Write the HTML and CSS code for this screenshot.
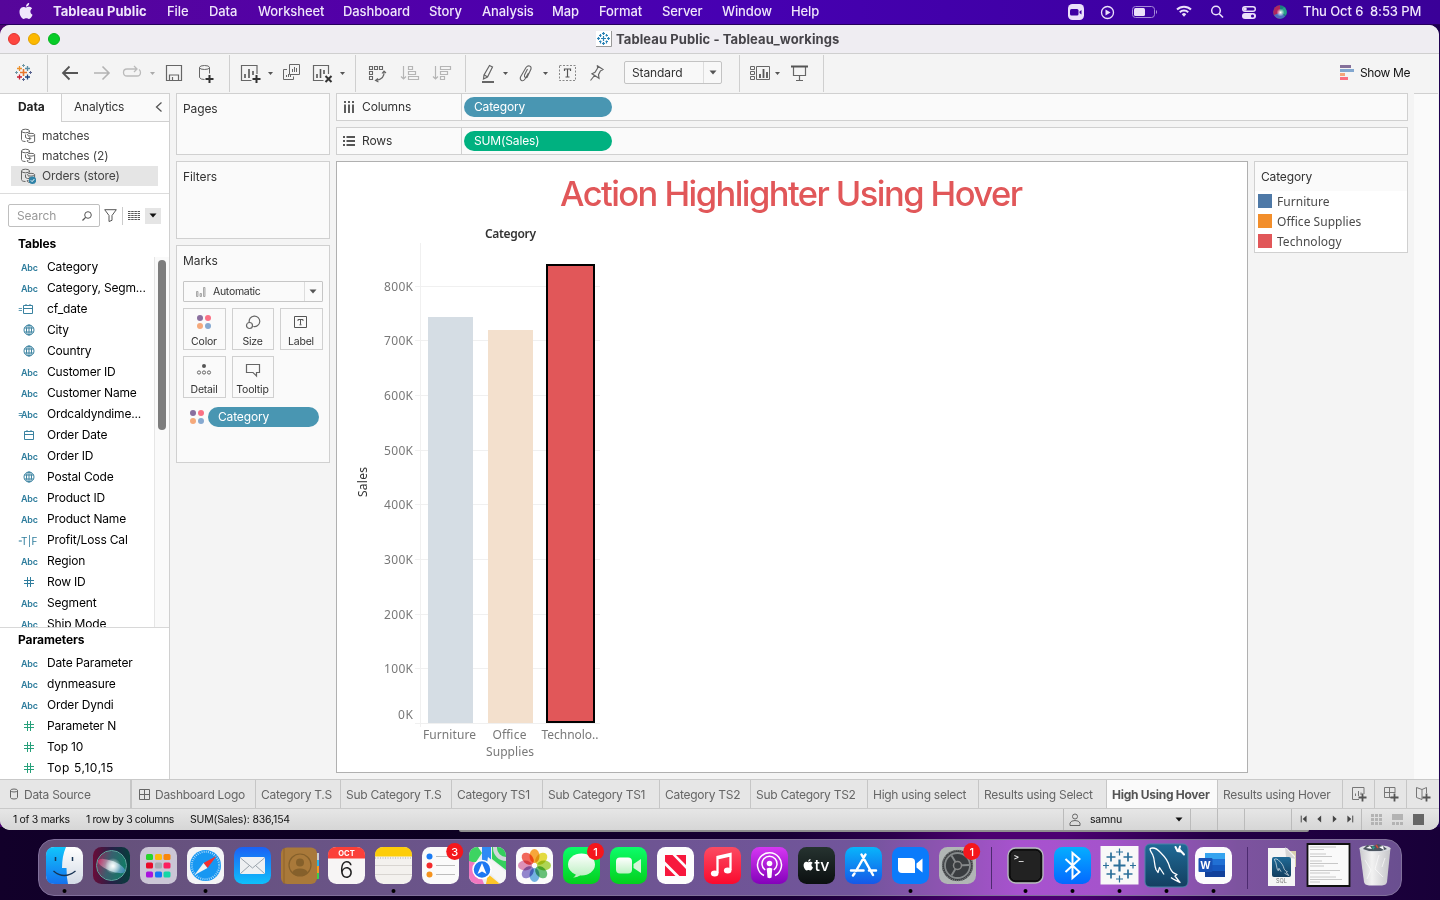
FILE: index.html
```html
<!DOCTYPE html>
<html lang="en">
<head>
<meta charset="utf-8">
<title>Tableau Public - Tableau_workings</title>
<link rel="stylesheet" href="styles.css">
</head>
<body>
<svg width="0" height="0" class="defs">
  <defs>
    <symbol id="globe" viewBox="0 0 12 12"><g fill="none" stroke="#3a82a0"><circle cx="6" cy="6" r="5"/><ellipse cx="6" cy="6" rx="2.500" ry="5"/><path d="M1.500 4h9M1.500 8h9M6 1v10"/></g></symbol>
    <symbol id="cal" viewBox="0 0 12 12"><path d="M1.500 2.500h9v8h-9zM1.500 5.500h9M4 1v2M8 1v2" fill="none" stroke="#3a82a0"/></symbol>
    <symbol id="hash" viewBox="0 0 12 12"><path d="M4.500 1v10M7.500 1v10M1 4.500h10M1 7.500h10" fill="none" stroke="currentColor" stroke-width="1"/></symbol>
    <symbol id="ds" viewBox="0 0 16 16"><g fill="none" stroke="#666" stroke-width="1"><path d="M5.500 13.500C3 13.500 1.500 12.800 1.500 11.500V3"/><ellipse cx="5.500" cy="3" rx="4" ry="1.800"/><path d="M9.500 3v1.500"/><ellipse cx="11" cy="6.700" rx="3.600" ry="1.400"/><path d="M14.600 6.700V13.500c-1 1.500-6.200 1.500-7.200 0V12M5.500 6.500q-1 4 2 4h3M8.800 8.500l2 2-2 2"/></g></symbol>
    <symbol id="dots" viewBox="0 0 16 16"><circle cx="4" cy="4" r="3" fill="#8a6f9e"/><circle cx="12" cy="4" r="3" fill="#fb7185"/><circle cx="4" cy="12" r="3" fill="#f5a97b"/><circle cx="12" cy="12" r="3" fill="#86a9d0"/></symbol>
    <symbol id="caret" viewBox="0 0 8 5"><path d="M0.500 0.500h7L4 4.500z" fill="currentColor"/></symbol>
    <linearGradient id="gFinder" x2="0" y2="1"><stop stop-color="#11c5fb"/><stop offset="1" stop-color="#1471ee"/></linearGradient>
    <linearGradient id="gWhite" x2="0" y2="1"><stop stop-color="#fff"/><stop offset="1" stop-color="#d3dbe6"/></linearGradient>
    <linearGradient id="gMail" x2="0" y2="1"><stop stop-color="#1b62f5"/><stop offset="1" stop-color="#0fc0fb"/></linearGradient>
    <linearGradient id="gGreen" x2="0" y2="1"><stop stop-color="#0cfd6a"/><stop offset="1" stop-color="#04cf1c"/></linearGradient>
    <linearGradient id="gBubble" x2="0" y2="1"><stop stop-color="#fff"/><stop offset="1" stop-color="#bff0c4"/></linearGradient>
    <linearGradient id="gMusic" x2="0" y2="1"><stop stop-color="#fb4b62"/><stop offset="1" stop-color="#fa0a2e"/></linearGradient>
    <linearGradient id="gPod" x2="0" y2="1"><stop stop-color="#d637f3"/><stop offset="1" stop-color="#8402ba"/></linearGradient>
    <linearGradient id="gStore" x2="0" y2="1"><stop stop-color="#08b5fb"/><stop offset="1" stop-color="#1558e8"/></linearGradient>
    <linearGradient id="gBt" x2="0" y2="1"><stop stop-color="#05aeff"/><stop offset="1" stop-color="#0468ff"/></linearGradient>
    <linearGradient id="gSql" x2="0" y2="1"><stop stop-color="#1f6a96"/><stop offset="1" stop-color="#133f60"/></linearGradient>
    <linearGradient id="gTv" x2="0" y2="1"><stop stop-color="#263330"/><stop offset="1" stop-color="#0b0f10"/></linearGradient>
    <linearGradient id="gSiriBg" x2="1" y2="0"><stop stop-color="#6a0c38"/><stop offset=".5" stop-color="#262048"/><stop offset="1" stop-color="#063f3c"/></linearGradient>
    <linearGradient id="gSiriIn"><stop stop-color="#e22f6b"/><stop offset=".5" stop-color="#dff"/><stop offset="1" stop-color="#4f8fd8"/></linearGradient>
    <linearGradient id="gSiriBall" x2="1" y2=".3"><stop stop-color="#a5285c"/><stop offset=".5" stop-color="#3c6f78"/><stop offset="1" stop-color="#138a6f"/></linearGradient>
    <radialGradient id="gGlow"><stop stop-color="#fff"/><stop offset="1" stop-color="#fff" stop-opacity="0"/></radialGradient>
    <linearGradient id="gTrash"><stop stop-color="#c9c9cc"/><stop offset=".4" stop-color="#f2f2f2"/><stop offset="1" stop-color="#c4c4c8"/></linearGradient>
    <clipPath id="tile"><rect x="5" y="7" width="37" height="37" rx="8.500"/></clipPath>
    <path id="apple" d="M12.152 6.896c-.948 0-2.415-1.078-3.960-1.040-2.040.027-3.910 1.183-4.961 3.014-2.117 3.675-.546 9.103 1.519 12.090 1.013 1.454 2.208 3.090 3.792 3.039 1.520-.065 2.090-.987 3.935-.987 1.831 0 2.350.987 3.960.948 1.637-.026 2.676-1.480 3.676-2.948 1.156-1.688 1.636-3.325 1.662-3.415-.039-.013-3.182-1.221-3.220-4.857-.026-3.040 2.480-4.494 2.597-4.559-1.429-2.090-3.623-2.324-4.390-2.376-2-.156-3.675 1.090-4.610 1.090zM15.530 3.830c.843-1.012 1.400-2.427 1.245-3.830-1.207.052-2.662.805-3.532 1.818-.780.896-1.454 2.338-1.273 3.714 1.338.104 2.715-.688 3.559-1.701"/>
    <path id="dolphin" d="M5 2.500c4-1.500 7 0 10 3.500 6 6 8 9 10 16 2 4 3 5 7 6.500l-2 1.500 5 6.500c-3-2-7-3-9-5M5 2.500c0 3 2 4 3 7 2 5 1 9 3 14l2 3 1.500-5 4.500 7" fill="none" stroke="#fff" stroke-width="1.300" stroke-linejoin="round"/>
  </defs>
</svg>

<header class="menubar">
  <svg class="apple" viewBox="0 0 24 24"><use href="#apple" fill="#efe6fb"/></svg>
  <nav class="menus">
    <b>Tableau Public</b><span>File</span><span>Data</span><span>Worksheet</span><span>Dashboard</span><span>Story</span><span>Analysis</span><span>Map</span><span>Format</span><span>Server</span><span>Window</span><span>Help</span>
  </nav>
  <svg class="tray" viewBox="1060 0 240 24" width="240" height="24">
    <rect x="1068" y="4" width="16" height="16" rx="4.500" fill="#ebe0fa"/><rect x="1070" y="9" width="8.500" height="6.500" rx="1.500" fill="#3f00a3"/><path d="M1079.500 11.500l2-1.500v4.500l-2-1.500z" fill="#3f00a3"/>
    <g fill="none" stroke="#ebe0fa"><circle cx="1107.500" cy="12.500" r="6" stroke-width="1.300"/><rect x="1132.500" y="6.500" width="22" height="11" rx="3" stroke="#a68ad8"/><path d="M1156.500 10.500v3" stroke="#a68ad8"/><path d="M1177 9.500a10 10 0 0 1 14 0M1179.800 12.300a6 6 0 0 1 8.400 0" stroke-width="2"/><circle cx="1216" cy="10.500" r="4.300" stroke-width="1.500"/><path d="M1219.200 13.700l3.800 3.800" stroke-width="1.600"/><rect x="1242.700" y="6.700" width="12.600" height="4.600" rx="2.300" stroke-width="1.400"/></g>
    <path d="M1105.500 9.500l5 3-5 3z" fill="#ebe0fa"/><rect x="1134" y="8" width="11" height="8" rx="1.500" fill="#ebe0fa"/><path d="M1181.800 14.300a3 3 0 0 1 4.400 0l-2.200 2.400z" fill="#ebe0fa"/>
    <circle cx="1245" cy="9" r="1.800" fill="#ebe0fa"/><rect x="1242" y="13" width="14" height="6" rx="3" fill="#ebe0fa"/><circle cx="1252.500" cy="16" r="1.600" fill="#3f00a3"/>
    <circle cx="1280" cy="12" r="6.800" fill="#1e7b80"/><path d="M1280 5.200a6.800 6.800 0 0 0 0 13.600z" fill="#b0245f"/><path d="M1280 12l4-5a6.800 6.800 0 0 1 2 8z" fill="#28a08a"/><path d="M1274 15a6.800 6.800 0 0 0 11 1.500l-4-4z" fill="#4c6ec0"/><circle cx="1280.500" cy="12.500" r="4" fill="url(#gGlow)"/>
  </svg>
  <span class="clock">Thu Oct 6&nbsp; 8:53 PM</span>
</header>

<main class="window">
  <div class="titlebar">
    <div class="lights"><i class="close"></i><i class="mini"></i><i class="zoom"></i></div>
    <div class="wintitle">
      <svg width="16" height="16" viewBox="0 0 16 16"><path d="M0 0h15v15H0z" fill="#fff"/><path d="M0 15.500h15.500V0" stroke="#999" fill="none"/><path d="M7.500 1v3M6 2.500h3M7.500 5v5M5 7.500h5M7.500 11v3M6 12.500h3M1 7.500h3M2.500 6v3M11 7.500h3M12.500 6v3M3 4.500h2.500M9.500 4.500H12M10.500 3v2.500M4.500 3v3M3 10.500h2.500M4.500 9.500v3M9.500 10.500H12M10.500 9.500v3" stroke="#2a83b5" fill="none" stroke-width="1.200"/></svg>
      <b>Tableau Public - Tableau_workings</b>
    </div>
  </div>

  <div class="toolbar">
    <div class="group">
      <svg width="47" height="40" viewBox="0 53 47 40" fill="none" stroke-width="1.300"><path d="M20 72.500h7M23.500 69v7" stroke="#e8762c" stroke-width="1.600"/><path d="M17 68.500h5M19.500 66v5" stroke="#eb912c"/><path d="M25 68.500h5M27.500 66v5" stroke="#5c8ea3"/><path d="M17 77h5M19.500 74.500v5" stroke="#c72035"/><path d="M25 77h5M27.500 74.500v5" stroke="#1f447e"/><path d="M22 65.500h3M23.500 64v3M15 72.500h3M16.500 71v3" stroke="#7199a6" stroke-width="1"/><path d="M29 72.500h3M30.500 71v3M22 79.500h3M23.500 78v3" stroke="#5b6591" stroke-width="1"/></svg>
    </div>
    <div class="group">
      <svg width="38" height="40" viewBox="48 53 38 40"><path d="M78 73H63M69.500 66.500L63 73l6.500 6.500" fill="none" stroke="#555" stroke-width="1.800"/></svg>
      <svg width="30" height="40" viewBox="86 53 30 40"><path d="M94 73h15M102.500 66.500L109 73l-6.500 6.500" fill="none" stroke="#b3b3b3" stroke-width="1.600"/></svg>
      <svg width="44" height="40" viewBox="116 53 44 40"><path d="M130 69h-3q-3.500 0-3.500 3.500T127 76h10q3.500 0 3.500-3.500 0-2-1.500-3M129 69h7M134 66l3 3-3 3" fill="none" stroke="#bbb" stroke-width="1.300"/><path d="M150 72h5l-2.500 3z" fill="#aaa"/></svg>
      <svg width="30" height="40" viewBox="160 53 30 40"><path d="M166.500 65.500h15v15h-15zM169.500 80v-5h9v5M172.500 77v3" fill="none" stroke="#666" stroke-width="1.200"/></svg>
      <svg width="39" height="40" viewBox="190 53 39 40"><g fill="none" stroke="#666"><ellipse cx="204.500" cy="67.500" rx="5" ry="2"/><path d="M199.500 67.500v10q1 2 5 2M209.500 67.500v6"/></g><path d="M209.500 75v8M205.500 79h8" stroke="#333" stroke-width="2"/></svg>
    </div>
    <div class="group">
      <svg width="45" height="40" viewBox="230 53 45 40"><path d="M257 74v-8.500h-15.500v15h10" fill="none" stroke="#666" stroke-width="1.200"/><path d="M245 78v-4M249 78v-9M253 75v-4" stroke="#555" stroke-width="1.600"/><path d="M256.500 75v8M252.500 79h8" stroke="#333" stroke-width="2"/><path d="M268 72h5l-2.500 3z" fill="#555"/></svg>
      <svg width="33" height="40" viewBox="275 53 33 40"><path d="M289.500 64.500h10v10h-10zM287 69.500h-3.500v10h10v-3" fill="none" stroke="#666"/><path d="M292.500 72v-3M294.500 72v-5M296.500 72v-4M286.500 77v-2M288.500 77v-3M290.500 77v-2" stroke="#666"/></svg>
      <svg width="47" height="40" viewBox="308 53 47 40"><path d="M328.500 74v-8.500h-15v15h10" fill="none" stroke="#666" stroke-width="1.200"/><path d="M317 78v-4M320.500 78v-9M324 74v-4" stroke="#555" stroke-width="1.600"/><path d="M325.500 76l6 6M331.500 76l-6 6" stroke="#333" stroke-width="2"/><path d="M340 72h5l-2.500 3z" fill="#555"/></svg>
    </div>
    <div class="group">
      <svg width="38" height="40" viewBox="356 53 38 40"><path d="M369.500 66.500h3v3h-3zM374.500 66.500h3v3h-3zM379.500 66.500h3v3h-3zM369.500 71.500h3v3h-3zM369.500 76.500h3v3h-3zM384 71q1 8-8 9.500M382 73.500l2-2.500 2 2M378 78.500l-2.500 2 3 1.500" fill="none" stroke="#666" stroke-width="1.100"/></svg>
      <svg width="32" height="40" viewBox="394 53 32 40"><path d="M403.500 66v13M401 76.500l2.500 2.500 2.500-2.500M408.500 66.500h4v3h-4zM408.500 71.500h7v3h-7zM408.500 76.500h10v3h-10z" fill="none" stroke="#b5b5b5" stroke-width="1.200"/></svg>
      <svg width="39" height="40" viewBox="426 53 39 40"><path d="M435.500 66v13M433 76.500l2.500 2.500 2.500-2.500M440.500 66.500h10v3h-10zM440.500 71.500h7v3h-7zM440.500 76.500h4v3h-4z" fill="none" stroke="#b5b5b5" stroke-width="1.200"/></svg>
    </div>
    <div class="group">
      <svg width="45" height="40" viewBox="466 53 45 40"><path d="M489.500 65.500l3 1.500-5 10-4 2 .5-4zM484.500 75l3 2" fill="none" stroke="#666" stroke-width="1.200"/><path d="M482 82h12" stroke="#666" stroke-width="2"/><path d="M503 72h5l-2.500 3z" fill="#555"/></svg>
      <svg width="40" height="40" viewBox="511 53 40 40"><path d="M527.500 69l-3 6q-.5 2 1 2.500t2-1l3.500-7.500q.5-2.500-1.500-3t-3.500 1.500l-5.500 9.500q-.8 2.500 1 3.500t3.500-1.500l3.500-6" fill="none" stroke="#666" stroke-width="1.100"/><path d="M543 72h5l-2.500 3z" fill="#555"/></svg>
      <svg width="32" height="40" viewBox="551 53 32 40"><path d="M559.500 65.500h16v15h-16z" fill="none" stroke="#888" stroke-dasharray="2 1.500"/><path d="M564.500 71v-2h6V71M567.500 69v8M565.500 77h4" fill="none" stroke="#555" stroke-width="1.200"/></svg>
      <svg width="41" height="40" viewBox="583 53 41 40"><path d="M597 65.500l6 4-1.500 1-1 .2-2 4 .5 3.500-7-4.500 3-1.500 2.500-4 .2-1.500zM594.500 75.500l-4 5" fill="none" stroke="#666" stroke-width="1.200"/></svg>
      <div class="fit"><span>Standard</span><i><svg width="8" height="5"><use href="#caret"/></svg></i></div>
    </div>
    <div class="group">
      <svg width="43" height="40" viewBox="740 53 43 40"><path d="M750.500 66.500h4v3h-4zM750.500 71.500h4v3h-4zM750.500 76.500h4v3h-4zM756.500 66.500h13v13h-13z" fill="none" stroke="#666"/><path d="M760 78v-4M763.500 78v-9M767 78v-6" stroke="#555" stroke-width="1.800"/><path d="M775 72h5l-2.500 3z" fill="#555"/></svg>
      <svg width="40" height="40" viewBox="783 53 40 40"><path d="M793.500 67v8.500h12V67M799.500 76v4M796 80.500h7" fill="none" stroke="#666" stroke-width="1.200"/><path d="M791 66.500h17" stroke="#555" stroke-width="1.800"/></svg>
    </div>
    <div class="showme">
      <svg width="14" height="15" viewBox="0 0 14 15"><path d="M0 0h11v3H0z" fill="#85709a"/><path d="M0 4h14v3H0z" fill="#82a7cf"/><path d="M0 8h5v3H0z" fill="#f4a57a"/><path d="M0 12h8v3H0z" fill="#fb6f80"/></svg>
      <span>Show Me</span>
    </div>
  </div>

  <div class="workspace">
    <aside class="datapane">
      <div class="ptabs"><b>Data</b><div><span>Analytics</span><svg width="8" height="10" viewBox="0 0 8 10"><path d="M6.500 .5L1.500 5l5 4.500" fill="none" stroke="#555" stroke-width="1.300"/></svg></div></div>
      <ul class="sources">
        <li><svg width="16" height="16"><use href="#ds"/></svg>matches</li>
        <li><svg width="16" height="16"><use href="#ds"/></svg>matches (2)</li>
        <li class="sel"><svg width="16" height="16"><use href="#ds"/><circle cx="12.500" cy="12.300" r="3.700" fill="#2f83a8"/><path d="M10.800 12.300l1.300 1.300 2.200-2.500" stroke="#fff" fill="none"/></svg>Orders (store)</li>
      </ul>
      <div class="searchrow">
        <div class="search"><span>Search</span><svg width="10" height="10" viewBox="0 0 10 10"><circle cx="6" cy="4" r="3.300" fill="none" stroke="#555"/><path d="M3.600 6.400L.5 9.500" stroke="#555" stroke-width="1.300"/></svg></div>
        <svg width="13" height="13" viewBox="0 0 13 13"><path d="M.7 .7h11.600L8 6.500v4.800L5 12.500v-6z" fill="none" stroke="#555"/></svg>
        <i class="vr"></i>
        <svg width="12" height="10" viewBox="0 0 12 10"><path d="M0 .5h12M0 2.500h12M0 4.500h12M0 6.500h12M0 8.500h12" stroke="#555" stroke-dasharray="2.500 .7"/></svg>
        <i class="ddl"><svg width="8" height="5"><use href="#caret"/></svg></i>
      </div>
      <h3 class="tables">Tables</h3>
      <div class="scroller">
        <ul class="fields">
          <li><em>Abc</em>Category</li>
          <li><em>Abc</em>Category, Segm...</li>
          <li><em class="calc"><s>=</s><svg width="12" height="12"><use href="#cal"/></svg></em>cf_date</li>
          <li><em><svg width="12" height="12"><use href="#globe"/></svg></em>City</li>
          <li><em><svg width="12" height="12"><use href="#globe"/></svg></em>Country</li>
          <li><em>Abc</em>Customer ID</li>
          <li><em>Abc</em>Customer Name</li>
          <li><em class="calc"><s>=</s>Abc</em>Ordcaldyndime...</li>
          <li><em><svg width="12" height="12"><use href="#cal"/></svg></em>Order Date</li>
          <li><em>Abc</em>Order ID</li>
          <li><em><svg width="12" height="12"><use href="#globe"/></svg></em>Postal Code</li>
          <li><em>Abc</em>Product ID</li>
          <li><em>Abc</em>Product Name</li>
          <li><em class="calc tf"><s>=</s>T|F</em>Profit/Loss Cal</li>
          <li><em>Abc</em>Region</li>
          <li><em><svg width="12" height="12"><use href="#hash"/></svg></em>Row ID</li>
          <li><em>Abc</em>Segment</li>
          <li><em>Abc</em>Ship Mode</li>
        </ul>
        <div class="track"><i></i></div>
      </div>
      <h3 class="params">Parameters</h3>
      <ul class="fields">
        <li><em>Abc</em>Date Parameter</li>
        <li><em>Abc</em>dynmeasure</li>
        <li><em>Abc</em>Order Dyndi</li>
        <li><em class="grn"><svg width="12" height="12"><use href="#hash"/></svg></em>Parameter N</li>
        <li><em class="grn"><svg width="12" height="12"><use href="#hash"/></svg></em>Top 10</li>
        <li class="wide"><em class="grn"><svg width="12" height="12"><use href="#hash"/></svg></em>Top 5,10,15</li>
      </ul>
    </aside>

    <section class="cards">
      <div class="card pages">Pages</div>
      <div class="card filters">Filters</div>
      <div class="card marks">Marks
        <div class="marktype"><svg width="10" height="10" viewBox="0 0 10 10"><path d="M.5 4.500h1.500v5H.5zM4 6.500h1.500v3H4zM7.500 .5H9v9H7.500z" fill="#ddd" stroke="#999" stroke-width=".8"/></svg><span>Automatic</span><i><svg width="8" height="5"><use href="#caret"/></svg></i></div>
        <div class="mgrid">
          <div><svg width="16" height="16"><use href="#dots"/></svg>Color</div>
          <div><svg width="16" height="16" viewBox="0 0 16 16"><g fill="none" stroke="#666" stroke-width="1.200"><path d="M4.300 8.500a5.300 5.300 0 1 1 4 4"/><circle cx="4.500" cy="11.500" r="3"/></g></svg>Size</div>
          <div><svg width="16" height="16" viewBox="0 0 16 16"><path d="M1.500 2.500h12v11h-12zM5 7V5.500h5V7M7.500 5.500v5M6.500 10.800h2" fill="none" stroke="#555"/></svg>Label</div>
          <div><svg width="16" height="16" viewBox="0 0 16 16"><circle cx="8" cy="4" r="2" fill="#555"/><g fill="none" stroke="#666"><circle cx="3" cy="10.500" r="1.600"/><circle cx="8" cy="10.500" r="1.600"/><circle cx="13" cy="10.500" r="1.600"/></g></svg>Detail</div>
          <div><svg width="16" height="16" viewBox="0 0 16 16"><path d="M1.500 2.500h13v8h-3v3.500L8 10.500H1.500z" fill="none" stroke="#666" stroke-width="1.200"/></svg>Tooltip</div>
        </div>
        <div class="markpill"><svg width="16" height="16"><use href="#dots"/></svg><span class="pill blue">Category</span></div>
      </div>
    </section>

    <section class="main">
      <div class="shelf"><div class="lab"><svg width="12" height="12" viewBox="0 0 12 12"><path d="M2 0v2M6 0v2M10 0v2M2 3.500V12M6 3.500V12M10 3.500V12" stroke="#555" stroke-width="1.900"/></svg>Columns</div><span class="pill blue">Category</span></div>
      <div class="shelf"><div class="lab"><svg width="12" height="12" viewBox="0 0 12 12"><path d="M0 2h2M0 6h2M0 10h2M3.500 2H12M3.500 6H12M3.500 10H12" stroke="#555" stroke-width="1.900"/></svg>Rows</div><span class="pill green">SUM(Sales)</span></div>
      <div class="viewrow">
        <div class="view">
          <svg class="chart" width="910" height="610" viewBox="337 162 910 610">
            <text x="560" y="206" class="title" textLength="463">Action Highlighter Using Hover</text>
            <text x="485" y="238" class="hdr" textLength="51">Category</text>
            <path class="grid" d="M415 286.500h185M415 340.500h185M415 395.500h185M415 450.500h185M415 504.500h185M415 559.500h185M415 614.500h185M415 668.500h185M415 723.500h185M420.500 243v484"/>
            <path d="M428 317h45v406h-45z" fill="#d5dde4"/>
            <path d="M488 330h45v393h-45z" fill="#f3e0cd"/>
            <path d="M547 265h47v457h-47z" fill="#e15759" stroke="#000" stroke-width="2"/>
            <g class="axis">
              <text x="384" y="291" textLength="29">800K</text><text x="384" y="345" textLength="29">700K</text><text x="384" y="400" textLength="29">600K</text><text x="384" y="455" textLength="29">500K</text><text x="384" y="509" textLength="29">400K</text><text x="384" y="564" textLength="29">300K</text><text x="384" y="619" textLength="29">200K</text><text x="384" y="673" textLength="29">100K</text><text x="398" y="719" textLength="15">0K</text>
              <text x="423" y="739" textLength="53">Furniture</text><text x="492.500" y="739" textLength="34">Office</text><text x="486" y="756" textLength="48">Supplies</text><text x="541.500" y="739" textLength="57">Technolo..</text>
              <text class="ytitle" transform="translate(366.500 497) rotate(-90)" textLength="30">Sales</text>
            </g>
          </svg>
        </div>
        <div class="legend">
          <div class="lhead">Category</div>
          <div class="item"><i class="c1"></i><span>Furniture</span></div>
          <div class="item"><i class="c2"></i><span>Office Supplies</span></div>
          <div class="item"><i class="c3"></i><span>Technology</span></div>
        </div>
      </div>
    </section>
    <div class="rail"></div>
  </div>

  <div class="sheets">
    <div class="src"><svg width="10" height="12" viewBox="0 0 10 12"><path d="M1.500 2.500v7q0 1.500 3.500 1.500t3.500-1.500v-7Q8.500 1 5 1T1.500 2.500Q1.500 4 5 4t3.500-1.500" fill="none" stroke="#666"/></svg><span>Data Source</span></div>
    <div class="dash"><svg width="11" height="11" viewBox="0 0 11 11"><path d="M.5.5h10v10H.5zM.5 5.500h10M5.500.5v10" fill="none" stroke="#666"/></svg><span>Dashboard Logo</span></div>
    <div><span>Category T.S</span></div><div><span>Sub Category T.S</span></div><div><span>Category TS1</span></div><div><span>Sub Category TS1</span></div><div><span>Category TS2</span></div><div><span>Sub Category TS2</span></div><div><span>High using select</span></div><div><span>Results using Select</span></div><div class="on"><span>High Using Hover</span></div><div><span>Results using Hover</span></div>
    <div class="ic"><svg width="16" height="16" viewBox="0 0 16 16"><path d="M13 8V1.500H1.500v12H8M4.500 10V7.500M7.500 10V5M10 9V6.500" fill="none" stroke="#777"/><path d="M11.500 7.500v8M7.500 11.500h8" stroke="#555" stroke-width="1.800"/></svg></div>
    <div class="ic"><svg width="16" height="16" viewBox="0 0 16 16"><path d="M12 7V1.500H1.500v10H8M1.500 6.500H12M6.500 1.500v10" fill="none" stroke="#777"/><path d="M11.500 7.500v8M7.500 11.500h8" stroke="#555" stroke-width="1.800"/></svg></div>
    <div class="ic"><svg width="16" height="16" viewBox="0 0 16 16"><path d="M11.500 7V1.500L7 3.500 1.500 1.500v10L7 13.500v-10" fill="none" stroke="#777"/><path d="M11.500 7.500v8M7.500 11.500h8" stroke="#555" stroke-width="1.800"/></svg></div>
  </div>
  <footer class="status">
    <span class="s1">1 of 3 marks</span><span class="s2">1 row by 3 columns</span><span class="s3">SUM(Sales): 836,154</span>
    <div class="user"><svg width="12" height="14" viewBox="0 0 12 14"><circle cx="6" cy="3.500" r="2.500" fill="none" stroke="#666"/><path d="M1 12.500V10q1-2.500 5-2.500t5 2.500v2.500z" fill="none" stroke="#666"/></svg><span>samnu</span><svg width="8" height="5"><use href="#caret"/></svg></div>
    <i></i><i></i><i class="wide"></i>
    <svg class="nav" width="71" height="20" viewBox="1291 810 71 20"><path d="M1300.500 816v7" stroke="#444"/><path d="M1306 816v7l-4-3.500zM1321 816v7l-4-3.500zM1333 816v7l4-3.500zM1348 816v7l4-3.500z" fill="#444"/><path d="M1353.500 816v7" stroke="#444"/></svg>
    <svg width="75" height="20" viewBox="1362 810 75 20"><path d="M1371 815.500h11M1371 819.500h11M1371 823.500h11" stroke="#b3b3b3" stroke-width="3" stroke-dasharray="3 1"/><path d="M1392 814h11v6h-11zM1392 822h3v3h-3zM1396 822h3v3h-3zM1400 822h3v3h-3z" fill="#b3b3b3"/><path d="M1413 814h11v11h-11z" fill="#666"/></svg>
  </footer>
</main>

<div class="behind"></div>
<div class="dock">
  <svg viewBox="0 0 47 55"><rect x="5" y="7" width="37" height="37" rx="8.500" fill="url(#gWhite)"/><path d="M13.500 7H25q-4 9-4 21h4.500q0 9 1.500 16H13.500Q5 44 5 35.500v-20Q5 7 13.500 7z" fill="url(#gFinder)"/><path d="M14.500 17v4M31.500 17v4" stroke="#173455" stroke-width="1.500"/><path d="M12.500 31q10.500 9 22 0" fill="none" stroke="#173455" stroke-width="1.400"/><circle cx="23.500" cy="51" r="2" /></svg>
  <svg viewBox="0 0 47 55"><rect x="5" y="7" width="37" height="37" rx="8.500" fill="url(#gSiriBg)"/><circle cx="23.500" cy="25.500" r="14.500" fill="url(#gSiriBall)" opacity=".8"/><ellipse cx="23.500" cy="26" rx="14.500" ry="5" fill="url(#gSiriIn)" opacity=".65" transform="rotate(22 23.500 26)"/><circle cx="23.500" cy="25.500" r="15" fill="none" stroke="#5fa8a0"/><circle cx="25" cy="26" r="8" fill="url(#gGlow)"/></svg>
  <svg viewBox="0 0 47 55"><rect x="5" y="7" width="37" height="37" rx="8.500" fill="#cbc6d6"/><g><rect x="11" y="14" width="7" height="6" rx="1.500" fill="#27d42c"/><rect x="20" y="14" width="7" height="6" rx="1.500" fill="#fcba0c"/><rect x="28.500" y="14" width="7" height="6" rx="1.500" fill="#f8860c"/><rect x="11" y="22.500" width="7" height="6" rx="1.500" fill="#e90a29"/><rect x="20" y="22.500" width="7" height="6" rx="1.500" fill="#a5aab2"/><rect x="28.500" y="22.500" width="7" height="6" rx="1.500" fill="#fb1e60"/><rect x="11" y="31.500" width="7" height="6" rx="1.500" fill="#a815dd"/><rect x="20" y="31.500" width="7" height="6" rx="1.500" fill="#1378f6"/><rect x="28.500" y="31.500" width="7" height="6" rx="1.500" fill="#15d6a6"/></g></svg>
  <svg viewBox="0 0 47 55"><rect x="5" y="7" width="37" height="37" rx="8.500" fill="#f4f4f6"/><circle cx="23.500" cy="25.500" r="15.500" fill="#1797f2"/><circle cx="23.500" cy="25.500" r="13.700" fill="none" stroke="#bfe2fb" stroke-width="2" stroke-dasharray=".8 1.350"/><path d="M34.500 16L21.500 23l4 5z" fill="#f5302f"/><path d="M12.500 35l9-12 4 5z" fill="#f3f3f3"/><circle cx="23.500" cy="51" r="2"/></svg>
  <svg viewBox="0 0 47 55"><rect x="5" y="7" width="37" height="37" rx="8.500" fill="url(#gMail)"/><rect x="11" y="17" width="25" height="17" rx="1.500" fill="#eef0f2"/><path d="M11.500 18l12 10 12-10M11.500 33.500l9-8M35.500 33.500l-9-8" fill="none" stroke="#9aa3ab"/></svg>
  <svg viewBox="0 0 47 55"><path d="M40 13h3v7h-3z" fill="#c9ccd0"/><path d="M40 20h3v6h-3z" fill="#27b6e6"/><path d="M40 26h3v7h-3z" fill="#f59a1c"/><path d="M40 33h3v6h-3z" fill="#3ccf4a"/><rect x="5" y="7.500" width="36" height="36.500" rx="6" fill="#a9793a"/><path d="M8 8v36" stroke="#8f6329" stroke-width="1"/><g fill="none" stroke="#85602b"><circle cx="24" cy="25" r="11" stroke-width="1.200"/></g><circle cx="24" cy="22.500" r="4" fill="#85602b"/><path d="M16 32.500q2-4 8-4t8 4q-3 3.500-8 3.500t-8-3.500" fill="#85602b"/></svg>
  <svg viewBox="0 0 47 55"><rect x="5" y="7" width="37" height="37" rx="8.500" fill="#f7f5f5"/><path d="M5 18.500v-3Q5 7 13.500 7h20Q42 7 42 15.500v3z" fill="#fb4039"/><text x="23.500" y="16" text-anchor="middle" class="oct">OCT</text><text x="23.500" y="38" text-anchor="middle" class="six">6</text></svg>
  <svg viewBox="0 0 47 55"><rect x="5" y="7" width="37" height="37" rx="8.500" fill="#f3f1ee"/><path d="M5 16.500v-1Q5 7 13.500 7h20Q42 7 42 15.500v1z" fill="#fdcd08"/><path d="M5 25.500h37M5 34.500h37" stroke="#d8d5d1"/><path d="M5 18h37" stroke="#aaa" stroke-dasharray="1 1.500"/><circle cx="23.500" cy="51" r="2"/></svg>
  <svg viewBox="0 0 47 55"><rect x="5" y="7" width="37" height="37" rx="8.500" fill="#fafafa"/><circle cx="12.500" cy="16.500" r="3" fill="#1a7cf4"/><circle cx="12.500" cy="25.500" r="3" fill="#f32a2c"/><circle cx="12.500" cy="34.500" r="3" fill="#f5931e"/><path d="M19 16.500h19M19 25.500h19M19 34.500h19" stroke="#bdbdbd"/><circle cx="37.700" cy="11.500" r="8.500" fill="#f5171c"/><text x="37.700" y="15.500" class="badge" text-anchor="middle">3</text></svg>
  <svg viewBox="0 0 47 55"><g clip-path="url(#tile)"><path d="M5 7h37v37H5z" fill="#eceef0"/><path d="M5 7h9l4 6-6 9-7 1z" fill="#3dd462"/><path d="M18 7h9v15h-9z" fill="#2f8af5"/><path d="M28 7h14v23L28 19z" fill="#34cf5d"/><path d="M5 21l7 2 8 21H5z" fill="#f177c0"/><path d="M24 34l12 10H22z" fill="#fdc528"/><path d="M24 17l19 16v7l-5 5-16-16z" fill="#f6f6f6"/><circle cx="42" cy="8" r="11" fill="none" stroke="#d0d6d9" stroke-width="4"/></g><circle cx="18" cy="29.500" r="9" fill="#1e78f2" stroke="#fff" stroke-width="1.500"/><path d="M18 23l4.500 11-4.500-2.500-4.500 2.500z" fill="#fff"/></svg>
  <svg viewBox="0 0 47 55"><rect x="5" y="7" width="37" height="37" rx="8.500" fill="#fbfbfb"/><g transform="translate(23.500 25.500)" class="petals"><ellipse cy="-9.500" rx="5" ry="7" fill="#fb9a18"/><ellipse cy="-9.500" rx="5" ry="7" fill="#e3d91f" transform="rotate(45)"/><ellipse cy="-9.500" rx="5" ry="7" fill="#a3d236" transform="rotate(90)"/><ellipse cy="-9.500" rx="5" ry="7" fill="#4fb963" transform="rotate(135)"/><ellipse cy="-9.500" rx="5" ry="7" fill="#5ba8e2" transform="rotate(180)"/><ellipse cy="-9.500" rx="5" ry="7" fill="#8273c8" transform="rotate(225)"/><ellipse cy="-9.500" rx="5" ry="7" fill="#dc7fae" transform="rotate(270)"/><ellipse cy="-9.500" rx="5" ry="7" fill="#f4503f" transform="rotate(315)"/></g></svg>
  <svg viewBox="0 0 47 55"><rect x="5" y="7" width="37" height="37" rx="8.500" fill="url(#gGreen)"/><ellipse cx="23.500" cy="24.500" rx="13.500" ry="11" fill="url(#gBubble)"/><path d="M18 33q0 3-3 4.500 5 0 8-3z" fill="#bff0c4"/><circle cx="37.500" cy="11.500" r="8.500" fill="#f5171c"/><text x="37.500" y="15.500" class="badge" text-anchor="middle">1</text></svg>
  <svg viewBox="0 0 47 55"><rect x="5" y="7" width="37" height="37" rx="8.500" fill="url(#gGreen)"/><rect x="11" y="17.500" width="16" height="16" rx="4" fill="url(#gBubble)"/><path d="M28.500 24l7.500-5v14l-7.500-5z" fill="#d6f5d9"/></svg>
  <svg viewBox="0 0 47 55"><rect x="5" y="7" width="37" height="37" rx="8.500" fill="#fdfdfd"/><path d="M13 15h7.500L34 29v7h-6.500L13 21.500zM24 15h10v10zM13 25.500V36h10.500z" fill="#f7183d"/></svg>
  <svg viewBox="0 0 47 55"><rect x="5" y="7" width="37" height="37" rx="8.500" fill="url(#gMusic)"/><path d="M18.500 33V17l13-3v16M18.500 18.500l13-3" fill="none" stroke="#fff" stroke-width="2.300"/><ellipse cx="15.700" cy="33.500" rx="3.800" ry="3" fill="#fff"/><ellipse cx="28.700" cy="30.500" rx="3.800" ry="3" fill="#fff"/></svg>
  <svg viewBox="0 0 47 55"><rect x="5" y="7" width="37" height="37" rx="8.500" fill="url(#gPod)"/><g fill="none" stroke="#fff" stroke-width="1.500"><path d="M18 35.500a12 12 0 1 1 11 0M19.200 30a7.500 7.500 0 1 1 8.600 0"/></g><circle cx="23.500" cy="23.500" r="2.800" fill="#fff"/><path d="M20.700 28.500q2.800-1.500 5.600 0l-.8 9q-2 1.500-4 0z" fill="#fff"/></svg>
  <svg viewBox="0 0 47 55"><rect x="5" y="7" width="37" height="37" rx="8.500" fill="url(#gTv)"/><use href="#apple" transform="translate(9.500 19) scale(.48)" fill="#fff"/><text x="21.500" y="31" class="tv" textLength="15">tv</text></svg>
  <svg viewBox="0 0 47 55"><rect x="5" y="7" width="37" height="37" rx="8.500" fill="url(#gStore)"/><path d="M21.500 14.500L33 35M25.500 14.500L16 31M11 30.500h12.500M29 30.500h7M14.500 33.500l-1.500 2" stroke="#fff" stroke-width="2.500" stroke-linecap="round"/></svg>
  <svg viewBox="0 0 47 55"><rect x="5" y="7" width="37" height="37" rx="8.500" fill="#0b7bfb"/><path d="M11 18h13q4 0 4 4v11H15q-4 0-4-4z" fill="#fff"/><path d="M29.500 23.500l6-5v14l-6-5z" fill="#fff"/><circle cx="23.500" cy="51" r="2"/></svg>
  <svg viewBox="0 0 47 55"><rect x="5" y="7" width="37" height="37" rx="8.500" fill="#b1b6b5"/><circle cx="23.500" cy="25.500" r="15.500" fill="#3a3d40"/><circle cx="23.500" cy="25.500" r="12.500" fill="none" stroke="#85898a" stroke-width="1.800"/><circle cx="23.500" cy="25.500" r="15" fill="none" stroke="#77797a" stroke-width="1.500" stroke-dasharray="1 1"/><path d="M23.500 25.500L35 25M23.500 25.500l-6-10M23.500 25.500l-6 10" stroke="#85898a" stroke-width="2"/><circle cx="23.500" cy="25.500" r="4" fill="#3a3d40" stroke="#888" stroke-width="1.500"/><circle cx="37.700" cy="11.500" r="8.500" fill="#f5171c"/><text x="37.700" y="15.500" class="badge" text-anchor="middle">1</text></svg>
  <i class="sep"></i>
  <svg viewBox="0 0 47 55"><rect x="6" y="8" width="35" height="35" rx="7.500" fill="#1d1d1f" stroke="#b9bdc0" stroke-width="1.300"/><rect x="8" y="10" width="31" height="31" rx="5.500" fill="#222" stroke="#000"/><text x="12" y="20" class="term">&gt;_</text><circle cx="23.500" cy="51" r="2"/></svg>
  <svg viewBox="0 0 47 55"><rect x="5" y="7" width="37" height="37" rx="8.500" fill="url(#gBt)"/><path d="M16.500 19l14 13-7 6V13l7 6-14 13" fill="none" stroke="#fff" stroke-width="2"/><circle cx="23.500" cy="51" r="2"/></svg>
  <svg viewBox="0 0 47 55"><path d="M4.500 6h38v38.500h-38z" fill="#f8f8f8"/><g fill="none" stroke="#2b6f99" stroke-width="1.700"><path d="M17.500 25.500h12M23.500 19.500v12" stroke-width="2.200"/><path d="M10.500 17h9M15 12.500v9M27.500 17h9M32 12.500v9M10.500 34h9M15 29.500v9M27.500 34h9M32 29.500v9"/><path d="M20 12h7M23.500 8.500v7M20 39h7M23.500 35.500v7M7 25.500h6M10 22.500v6M34 25.500h6M37 22.500v6" stroke-width="1.200"/></g><circle cx="23.500" cy="51" r="2"/></svg>
  <svg viewBox="0 0 47 55"><rect x="2" y="4" width="43" height="43" rx="5" fill="url(#gSql)" stroke="#4886a8"/><use href="#dolphin" transform="translate(2 6)"/><path d="M32.500 7l2 4 3 .5M36 9l5 5.500M37 6.500l-1 3" fill="none" stroke="#fff" stroke-width="2" stroke-linecap="round"/><circle cx="23.500" cy="51" r="2"/></svg>
  <svg viewBox="0 0 47 55"><rect x="5" y="7" width="37" height="37" rx="8.500" fill="#fcfcfd"/><path d="M15 13h20v6H15z" fill="#36a4ef"/><path d="M15 19h20v6H15z" fill="#2170d4"/><path d="M15 25h20v6H15z" fill="#1659c0"/><path d="M15 31h20v6H15z" fill="#12419b"/><rect x="8.500" y="18" width="14" height="14" rx="1" fill="#1852b5"/><text x="15.500" y="29" class="wd" text-anchor="middle">W</text><circle cx="23.500" cy="51" r="2"/></svg>
  <i class="sep"></i>
  <svg viewBox="0 0 47 55"><path d="M32 11h6v16h-6z" fill="#d8cfae"/><path d="M10 8h19l8 8v30H10z" fill="#f5f5f5"/><path d="M27 7l11 12-10-2z" fill="#d6d6d6"/><rect x="14" y="17" width="19" height="20" rx="2" fill="url(#gSql)"/><use href="#dolphin" transform="translate(14 18) scale(.48)"/><text x="23.500" y="43" class="sql" text-anchor="middle">SQL</text></svg>
  <svg viewBox="0 0 47 55"><path d="M2.500 4h42v42h-42z" fill="#fafafa" stroke="#111" stroke-width="1.800"/><path d="M5 7h26M5 9.500h14M5 14h16M5 16.500h22M5 21h12M5 23.500h28M5 26h14M5 30.500h30M5 33h20M5 37h26M5 39.500h32M5 42h10" stroke="#bbb" stroke-width=".8"/></svg>
  <svg viewBox="0 0 47 55"><path d="M7.500 8h31l-3.500 34q-.5 3-5 3.500H17q-4.500-.5-5-3.500z" fill="url(#gTrash)"/><path d="M13 20l6 10-4 9M27 15l-4 14 8 8M33 18l-3 9" stroke="#fff" fill="none" opacity=".6"/><ellipse cx="23" cy="8.500" rx="15.500" ry="3.500" fill="#d9dbe0"/><path d="M11 9l4-4 5 1 6-2 5 2 4 3-6 2H17z" fill="#4d5661"/><path d="M14 8l4-2 2 3zM27 7l4-1 1 4z" fill="#fff"/><path d="M20 6l3 1-2 3z" fill="#25a08c"/><path d="M24 5l2 3" stroke="#cf4c3c" stroke-width="1.500"/></svg>
</div>
</body>
</html>
```
FILE: styles.css
```css
* { box-sizing: border-box; }
html, body { margin: 0; width: 1440px; height: 900px; overflow: hidden; }
body {
  font: 12px/16px Inter, "Liberation Sans", sans-serif;
  color: #333;
  display: flex;
  flex-direction: column;
  background:
    linear-gradient(90deg, #12002a, #0c0020 30%, #190036 55%, #2b004c 62%, #4c0070 68%, #4c0072 74%, #240046 84%, #180038) 0 827px / 100% 73px no-repeat,
    linear-gradient(90deg, #4b0570, #330090 90%, #1e0050);
}
ul { list-style: none; margin: 0; padding: 0; }
h3 { margin: 0; font-size: 12px; color: #000; letter-spacing: -0.1px; }
svg { flex: none; display: block; }
i, em, s { font-style: normal; text-decoration: none; }
.defs { position: absolute; }

/* menu bar */
.menubar { height: 25px; flex: none; display: flex; align-items: center; padding: 0 0 1px 18px; color: #efe6fb; font-size: 13px; font-weight: 500; background: linear-gradient(90deg, #56069a, #5200a8 25%, #4700b2 50%, #3c00a0 85%, #3a0098); border-bottom: 1px solid #25005c; }
.apple { width: 16px; height: 16px; margin: 0 19px 1px 0; }
.menus { display: grid; grid-template-columns: 114px 42px 49px 85px 86px 53px 70px 47px 63px 60px 69px 40px; white-space: nowrap; width: 1007px; letter-spacing: -0.1px; padding-bottom: 1px; }
.menus b { font-weight: 700; letter-spacing: 0.05px; }
.clock { margin-left: 3px; white-space: nowrap; letter-spacing: -0.1px; padding-bottom: 1px; }

/* window */
.window { width: 1439px; height: 805px; flex: none; background: #f4f4f4; border-radius: 10px; overflow: hidden; display: flex; flex-direction: column; }
.titlebar { height: 29px; flex: none; background: #efedf2; border-bottom: 1px solid #cfcfcf; display: flex; align-items: center; }
.lights { display: flex; gap: 8px; padding-left: 8px; width: 596px; }
.lights i { width: 12px; height: 12px; border-radius: 50%; }
.close { background: #fe4640; border: 1px solid #e0352f; }
.mini { background: #fdb900; border: 1px solid #e0a100; }
.zoom { background: #07cc28; border: 1px solid #06b322; }
.wintitle { display: flex; align-items: center; gap: 4px; color: #464449; font-size: 13px; letter-spacing: 0.09px; white-space: nowrap; padding-bottom: 1px; }

.toolbar { height: 39px; flex: none; display: flex; }
.group { display: flex; height: 39px; align-items: flex-start; border-right: 1px solid #d0d0d0; box-sizing: content-box; border-image: linear-gradient(transparent 2px, #cfcfcf 2px 37px, transparent 37px) 1; }
.group > svg { margin-top: -1px; }
.fit { width: 98px; height: 23px; margin: 7px 17px 0 0; border: 1px solid #c3c3c3; border-radius: 2px; display: flex; align-items: center; background: #f8f8f8; }
.fit span { flex: 1; padding-left: 7px; letter-spacing: -0.1px; }
.fit i { width: 18px; height: 21px; border-left: 1px solid #ddd; display: flex; align-items: center; justify-content: center; color: #555; }
.showme { margin-left: auto; padding: 0 29px 2px 0; display: flex; align-items: center; gap: 6px; color: #111; letter-spacing: -0.4px; }

.workspace { height: 686px; flex: none; display: flex; align-items: flex-start; }

/* data pane */
.datapane { width: 170px; height: 686px; background: #fff; border-right: 1px solid #d0d0d0; display: flex; flex-direction: column; flex: none; }
.ptabs { display: flex; height: 29px; flex: none; border-top: 1px solid #d0d0d0; }
.ptabs b { width: 61px; padding: 5px 0 0 18px; color: #222; letter-spacing: -0.1px; }
.ptabs div { flex: 1; background: #fafafa; border: solid #d0d0d0; border-width: 0 0 1px 1px; display: flex; align-items: center; justify-content: space-between; padding: 0 6px 2px 12px; letter-spacing: -0.2px; }
.sources { padding: 4px 11px 0; height: 72px; border-bottom: 1px solid #dcdcdc; flex: none; color: #444; letter-spacing: -0.12px; }
.sources li { height: 20px; display: flex; align-items: center; gap: 6px; padding-left: 9px; }
.sources .sel { background: #e5e5e5; }
.searchrow { display: flex; align-items: center; height: 43px; padding-left: 8px; flex: none; }
.search { width: 92px; height: 23px; border: 1px solid #bfbfbf; border-radius: 2px; display: flex; align-items: center; justify-content: space-between; padding: 0 7px 0 8px; color: #999; margin-right: 4px; letter-spacing: -0.1px; }
.vr { width: 1px; height: 18px; background: #ccc; margin: 0 5px; }
.ddl { width: 16px; height: 16px; background: #e5e5e5; display: flex; align-items: center; justify-content: center; color: #111; margin-left: 5px; }
.tables { height: 20px; padding-left: 18px; flex: none; line-height: 13px; }
.scroller { height: 371px; flex: none; overflow: hidden; display: flex; border-bottom: 1px solid #d8d8d8; }
.scroller .fields { flex: 1; margin-top: -1px; }
.fields { color: #000; letter-spacing: -0.17px; }
.fields .wide { letter-spacing: 0.55px; }
.params + .fields { margin-top: -1px; }
.fields li { height: 21px; display: flex; align-items: center; white-space: nowrap; }
.fields em { width: 29px; margin-left: 18px; padding-left: 3px; color: #2f7d9d; font-size: 9px; font-weight: 600; display: flex; align-items: center; flex: none; letter-spacing: -0.2px; padding-top: 2px; }
.fields em svg { margin-left: 2px; margin-top: -1px; }
.fields em.calc { padding-left: 0; }
.fields em.calc s { width: 3px; overflow: visible; font-size: 7px; }
.fields em.calc svg { margin-left: 1px; }
.fields em.tf { font-weight: 400; font-size: 10px; letter-spacing: 0.3px; }
.fields em.grn { color: #26a07a; }
.track { width: 15px; border-left: 1px solid #e6e6e6; background: #fafafa; padding: 3px 0 0 3px; }
.track i { display: block; width: 8px; height: 170px; border-radius: 4px; background: #7d7d7d; }
.params { height: 25px; padding: 4px 0 0 18px; flex: none; line-height: 16px; }

/* cards */
.cards { width: 154px; margin: 0 6px; display: flex; flex-direction: column; gap: 6px; flex: none; }
.card { background: #fafafa; border: 1px solid #d0d0d0; padding: 7px 6px 0; letter-spacing: -0.1px; }
.pages { height: 62px; }
.filters { height: 78px; }
.marks { height: 218px; }
.marktype { height: 21px; margin-top: 12px; border: 1px solid #c6c6c6; border-radius: 1px; display: flex; align-items: center; font-size: 10.5px; letter-spacing: -0.3px; }
.marktype svg { margin-left: 12px; }
.marktype span { flex: 1; margin-left: 7px; }
.marktype i { width: 18px; height: 19px; border-left: 1px solid #ddd; display: flex; align-items: center; color: #555; }
.marktype i svg { margin-left: 4px; }
.mgrid { display: grid; grid-template-columns: 43px 42px 43px; gap: 6px; margin-top: 6px; letter-spacing: -0.2px; }
.mgrid div { height: 42px; border: 1px solid #d0d0d0; display: flex; flex-direction: column; align-items: center; font-size: 10.5px; padding: 5px 1px 0 0; gap: 4px; }
.markpill { display: flex; align-items: center; gap: 3px; margin: 9px 0 0 6px; }
.pill { height: 20px; border-radius: 10px; color: #fff; padding: 0 0 0 10px; line-height: 19px; width: 148px; letter-spacing: -0.15px; }
.markpill .pill { width: 111px; }
.pill.blue { background: #4996b2; }
.pill.green { background: #00b180; }

/* shelves and view */
.main { display: flex; flex-direction: column; gap: 6px; width: 1072px; flex: none; }
.shelf { height: 28px; background: #fafafa; border: 1px solid #d0d0d0; display: flex; align-items: center; }
.lab { width: 125px; height: 26px; border-right: 1px solid #d0d0d0; display: flex; align-items: center; gap: 7px; padding-left: 6px; margin-right: 2px; letter-spacing: -0.1px; }
.viewrow { display: flex; gap: 6px; align-items: flex-start; }
.view { width: 912px; height: 612px; background: #fff; border: 1px solid #b0b0b0; }
.title { font-size: 34.5px; font-weight: 450; fill: #e15759; }
.hdr { font: 600 12px "Noto Sans", sans-serif; fill: #333; }
.grid { stroke: #f0f0f0; fill: none; }
.axis { font: 12px "Noto Sans", sans-serif; fill: #787878; }
.ytitle { fill: #333; }
.legend { width: 154px; height: 92px; border: 1px solid #d0d0d0; background: #fff; font-family: "Noto Sans", sans-serif; }
.lhead { height: 29px; background: #fafafa; padding: 7px 0 0 6px; font-family: Inter, sans-serif; letter-spacing: -0.15px; }
.item { height: 20px; display: flex; align-items: center; gap: 5px; padding-left: 3px; color: #4a4a4a; letter-spacing: 0.03px; }
.item span { padding-top: 2px; }
.item i { width: 14px; height: 14px; }
.c1 { background: #4e79a7; } .c2 { background: #f28e2b; } .c3 { background: #e15759; }
.rail { width: 24px; height: 686px; margin-left: 6px; background: #fafafa; border: solid #d0d0d0; border-width: 1px 0 0; }

/* sheet tabs */
.sheets { height: 30px; flex: none; display: grid; grid-template-columns: 132px 124px 85px 111px 91px 117px 91px 117px 111px 128px 111px 125px 32px 32px 32px; border: solid #c9c9c9; border-width: 1px 0; background: #e6e6e6; color: #666; letter-spacing: -0.27px; }
.sheets div { border-right: 1px solid #c6c6c6; padding-left: 5px; display: flex; align-items: center; white-space: nowrap; }
.sheets span { padding-top: 2px; }
.sheets .src { border-right-width: 2px; padding-left: 9px; gap: 5px; }
.sheets .dash { padding-left: 7px; gap: 5px; }
.sheets .on { background: #fafafa; font-weight: 700; color: #555; }
.sheets .ic { padding-left: 8px; }
.sheets .ic:last-child { border: 0; }
.status { height: 21px; flex: none; display: flex; align-items: center; font-size: 10.5px; color: #111; background: linear-gradient(#e6e6e6, #d6d6d6); white-space: nowrap; letter-spacing: -0.3px; }
.status span { padding-top: 1px; }
.s1 { width: 73px; margin-left: 13px; }
.s2 { width: 104px; letter-spacing: -0.4px; }
.s3 { width: 873px; letter-spacing: -0.17px; }
.user { width: 127px; height: 21px; border-left: 1px solid #bbb; display: flex; align-items: center; padding: 0 7px 0 5px; }
.user span { flex: 1; margin-left: 9px; letter-spacing: -0.2px; }
.status > i { width: 27px; height: 21px; border-left: 1px solid #bbb; }
.status > i.wide { width: 47px; }
.status .nav { border: solid #bbb; border-width: 0 1px; height: 21px; }

/* edge of the window stacked below */
.behind { width: 850px; height: 2px; flex: none; margin-left: 459px; background: #8f8f8f; border-radius: 0 0 8px 8px; }

/* dock */
.dock { width: 1364px; height: 57px; flex: none; margin: 7px 0 0 38px; border: 1px solid #81709b; border-radius: 16px; display: flex; padding-left: 1.5px; background: linear-gradient(90deg, #645078, #6a5488 25%, #71559b 60%, #8c54b0 66%, #a852cf 72%, #a553cc 78%, #7d539f 88%, #6a4f90); }
.dock svg { width: 47px; height: 55px; }
.petals ellipse { mix-blend-mode: multiply; opacity: .85; }
.sep { width: 1px; height: 42px; margin: 7px 10px; background: #4d2b70; }
.oct { font: 700 7.5px Inter, sans-serif; fill: #fff; }
.six { font: 300 23px Inter, sans-serif; fill: #222; }
.badge { font: 500 11px Inter, sans-serif; fill: #fff; }
.tv { font: 500 16px Inter, sans-serif; fill: #fff; }
.term { font: 700 8px "DejaVu Sans Mono", monospace; fill: #eee; }
.wd { font: 700 10px Inter, sans-serif; fill: #fff; }
.sql { font: 5.5px Inter, sans-serif; fill: #777; }
```
